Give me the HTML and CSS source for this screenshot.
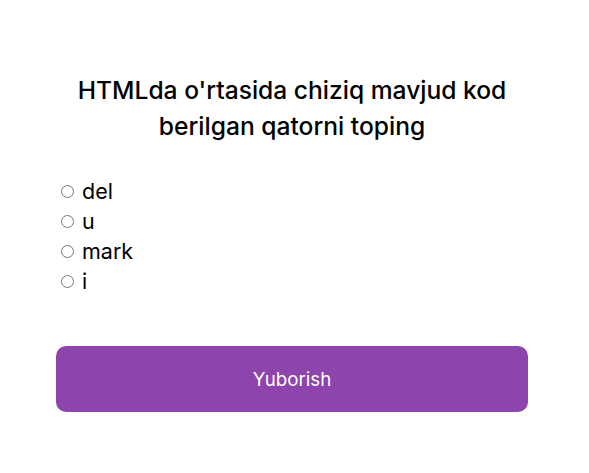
FILE: index.html
```html
<!DOCTYPE html>
<html lang="uz">
<head>
<meta charset="utf-8">
<link rel="stylesheet" href="styles.css">
</head>
<body>
<main class="quiz">
  <h1 class="question">HTMLda o'rtasida chiziq mavjud kod berilgan qatorni toping</h1>
  <ul class="options">
    <li><label class="option"><input type="radio" name="a"><span>del</span></label></li>
    <li><label class="option"><input type="radio" name="a"><span>u</span></label></li>
    <li><label class="option"><input type="radio" name="a"><span>mark</span></label></li>
    <li><label class="option"><input type="radio" name="a"><span>i</span></label></li>
  </ul>
  <button class="submit" type="button">Yuborish</button>
</main>
</body>
</html>
```
FILE: styles.css
```css
html, body {
  margin: 0;
  background: #ffffff;
}
body {
  font-family: Inter, "Open Sans", sans-serif;
  color: #000;
}
.quiz {
  width: 472px;
  margin: 0 0 0 56px;
  padding-top: 72px;
}
.question {
  margin: 0;
  font-size: 24.6px;
  font-weight: 500;
  line-height: 36px;
  text-align: center;
  padding: 0 10px;
}
.options {
  list-style: none;
  margin: 32px 0 0;
  padding: 0;
}
.options li {
  height: 30px;
  display: flex;
  align-items: center;
}
.option {
  font-size: 21.5px;
  display: flex;
  align-items: center;
  gap: 8px;
}
.option input {
  margin: 0 0 0 5px;
  width: 13px;
  height: 13px;
}
.submit {
  display: block;
  width: 100%;
  height: 66px;
  margin-top: 50px;
  border: none;
  border-radius: 10px;
  background: #8e44ad;
  color: #fff;
  font-family: inherit;
  font-size: 18.7px;
}
```
